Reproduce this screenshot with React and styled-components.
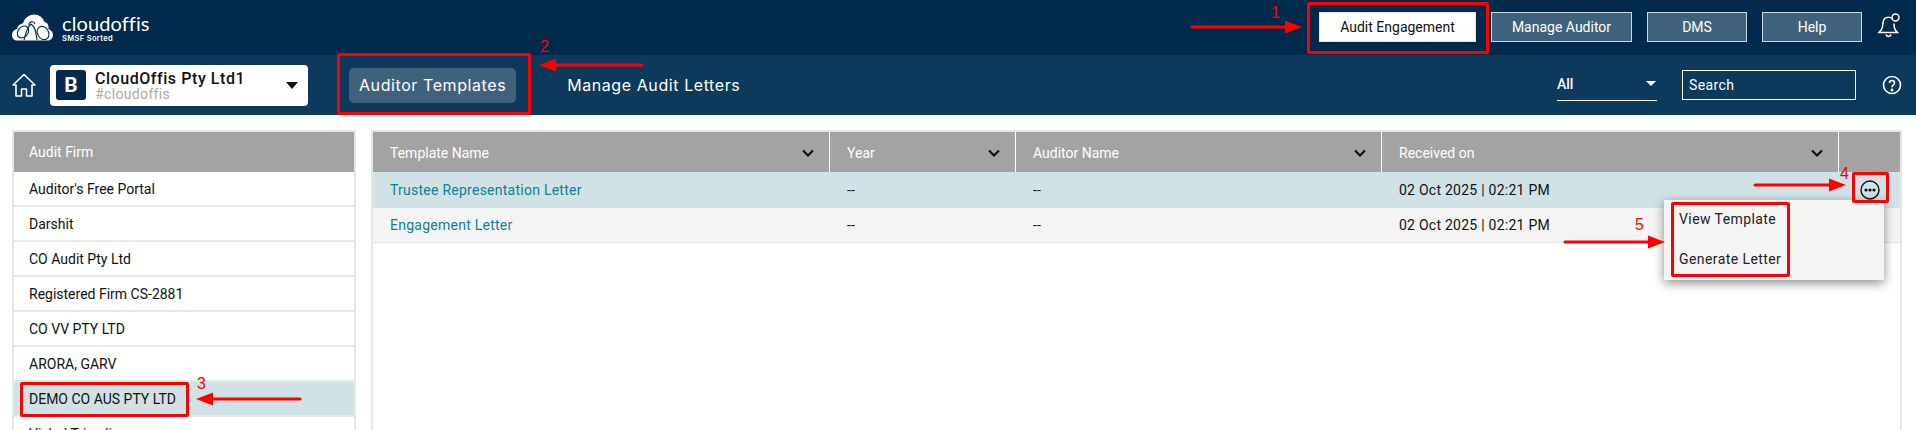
import React from "react";
import styled, { createGlobalStyle } from "styled-components";

const Global = createGlobalStyle`
  html, body { margin: 0; padding: 0; height: 430px; overflow: hidden; background: #fff; }
  body { font-family: Roboto, "Liberation Sans", sans-serif; font-size: 14px; color: #111; }
  * { box-sizing: border-box; }
`;

const Page = styled.div`position: relative; width: 1916px; height: 430px; overflow: hidden;`;

const TopBar = styled.header`
  height: 55px; background: #00294c; display: flex; align-items: flex-start;
  justify-content: space-between; padding: 12px 14px 0 12px;
`;
const Logo = styled.div`display: flex; gap: 9px; align-items: flex-start; margin-top: 2px; color: #fff;`;
const LogoText = styled.div`display: flex; flex-direction: column;`;
const LogoName = styled.span`font-family: Lato, sans-serif; font-size: 20px; line-height: 18px; letter-spacing: .1px;`;
const LogoSub = styled.span`font-family: Inter, sans-serif; font-size: 7.5px; font-weight: 600; line-height: 10px; letter-spacing: .35px; margin-top: 2px;`;
const TopNav = styled.nav`display: flex; align-items: flex-start; gap: 15px;`;
const NavBtn = styled.button`
  width: ${p => p.$w}px; height: 30px; font: 400 14px Roboto, sans-serif; padding: 0;
  color: ${p => p.$active ? "#111" : "#fff"}; background: ${p => p.$active ? "#fff" : "#3f627c"};
  border: 1px solid #cfd8de;
  border-color: ${p => p.$active ? "#e5e5e5" : "#cfd8de"};
`;
const BellWrap = styled.div`margin-top: 1px; height: 26px;`;

const SubBar = styled.div`
  height: 60px; background: #0d3a5c; display: flex; align-items: center; padding: 0 12px;
`;
const Firm = styled.div`
  width: 258px; height: 41px; margin-left: 14px; background: #fff; border-radius: 4px; display: flex;
  align-items: center; padding: 0 10px 0 6px; gap: 9px; margin-top: 0;
`;
const FirmBadge = styled.div`
  width: 30px; height: 30px; border-radius: 3px; background: #00294c; color: #fff;
  display: flex; align-items: center; justify-content: center; font: 700 21px Roboto, sans-serif;
`;
const FirmText = styled.div`flex: 1; display: flex; flex-direction: column;`;
const FirmName = styled.span`font-size: 16px; font-weight: 500; line-height: 17px; letter-spacing: .55px; margin-top: 1px;`;
const FirmTag = styled.span`font-size: 14px; line-height: 15px; color: #aaa; letter-spacing: .35px;`;
const Caret = styled.span`
  width: 0; height: 0; border-left: ${p => p.$s}px solid transparent; border-right: ${p => p.$s}px solid transparent;
  border-top: ${p => p.$h}px solid ${p => p.$c};
`;
const Tabs = styled.div`display: flex; align-items: center; margin-left: 41px; flex: 1; gap: 41px;`;
const Tab = styled.div`
  height: 35px; padding: 0 10px; border-radius: 5px; display: flex; align-items: center; color: #fff;
  font: 400 16px Inter, sans-serif; letter-spacing: .58px; background: ${p => p.$active ? "#3f627c" : "transparent"};
`;
const Filter = styled.div`
  width: 100px; height: 32px; margin-top: 0; border-bottom: 1px solid #fff; color: #fff; display: flex;
  align-items: center; justify-content: space-between; padding: 0 1px 2px 0; font-size: 14px; font-weight: 500;
`;
const Search = styled.div`
  width: 174px; height: 30px; margin-left: 25px; border: 1px solid #fff; color: #fff; display: flex; align-items: center;
  padding: 0 6px; font-size: 14px; font-weight: 400; letter-spacing: .4px;
`;
const HelpIcon = styled.div`margin-left: 26px; width: 20px; height: 20px; margin-right: 2px;`;

const Content = styled.main`display: flex; padding: 15px 14px 0 12px; gap: 15px;`;
const FirmPanel = styled.section`width: 344px; height: 340px; border: 2px solid #e6e6e6; flex: none;`;
const PanelHead = styled.div`
  height: 40px; background: #a3a3a3; color: #fff; font-size: 14px; display: flex; align-items: center; padding: 0 15px;
`;
const FirmRow = styled.div`
  height: 35px; padding: 0 15px; display: flex; align-items: center; font-size: 14px; color: #111;
  border-bottom: 2px solid #e8e8e8; background: ${p => p.$sel ? "#d1e2e7" : "#fff"};
`;
const TablePanel = styled.section`flex: 1; height: 340px; border: 2px solid #e6e6e6; position: relative;`;
const Grid = `display: grid; grid-template-columns: 457px 186px 366px 457px 1fr;`;
const HeadRow = styled.div`${Grid} height: 40px; background: #a3a3a3;`;
const HeadCell = styled.div`
  display: flex; align-items: center; justify-content: space-between; padding: 2px 14px 0 17px; color: #fff;
  font-size: 14px; border-right: 1px solid #fff; &:last-child { border-right: 0; }
`;
const Row = styled.div`
  ${Grid} height: ${p => p.$h}px; background: ${p => p.$sel ? "#d1e2e7" : "#f4f4f4"};
  border-bottom: ${p => p.$sel ? "0" : "1px solid #e6e6e6"};
`;
const Cell = styled.div`display: flex; align-items: center; padding-left: 17px; font-size: 14px; letter-spacing: .25px; color: #111;`;
const LinkCell = styled(Cell)`color: #0e7f94;`;
const MoreCell = styled.div`display: flex; align-items: center; padding-left: 21px;`;

const Menu = styled.div`
  position: absolute; left: 1291px; top: 68px; width: 220px; height: 80px; background: #f4f4f4;
  box-shadow: 0 3px 10px rgba(0,0,0,.45); display: flex; flex-direction: column;
  padding: 0 15px; font-size: 14px; letter-spacing: .42px; color: #222; z-index: 2;
`;
const MenuItem = styled.div`line-height: 40px; margin-top: ${p => p.$first ? "-1px" : "0"};`;

const Mark = styled.div`
  position: absolute; left: ${p => p.$x}px; top: ${p => p.$y}px; width: ${p => p.$w}px; height: ${p => p.$h}px;
  border: 3px solid #f00; border-radius: 2px; z-index: 5; pointer-events: none;
`;
const Num = styled.span`
  position: absolute; left: ${p => p.$x}px; top: ${p => p.$y}px; color: #f00; font: 400 16px "Liberation Sans", sans-serif;
  line-height: 18px; z-index: 5;
`;
const ArrowLayer = styled.svg`position: absolute; left: 0; top: 0; z-index: 5; pointer-events: none;`;

const Chevron = () => (
  <svg width="14" height="14" viewBox="0 0 14 14" fill="none" stroke="#111" strokeWidth="2.2"><path d="M2 4.500 7 9.500 12 4.500" /></svg>
);

const firms = ["Auditor's Free Portal", "Darshit", "CO Audit Pty Ltd", "Registered Firm CS-2881", "CO VV PTY LTD", "ARORA, GARV", "DEMO CO AUS PTY LTD", "Vishal Trivedi"];

const arrows = [
  [1192, 27, 1302, 27],
  [642, 65, 539, 65],
  [300, 399, 196, 399],
  [1755, 185, 1846, 185],
  [1565, 242, 1665, 242],
];

function Arrow({ a }) {
  const [x1, y1, x2, y2] = a;
  const d = x2 > x1 ? 1 : -1;
  const bx = x2 - d * 17;
  return (
    <g>
      <line x1={x1} y1={y1} x2={bx} y2={y2} stroke="#f00" strokeWidth="3" strokeLinecap="round" />
      <polygon points={`${x2},${y2} ${bx},${y2 - 6.5} ${bx},${y2 + 6.5}`} fill="#f00" />
    </g>
  );
}

export default function App() {
  return (
    <Page>
      <Global />
      <TopBar>
        <Logo>
          <svg width="41" height="27" viewBox="0 0 41 27">
            <path fill="#fff" d="M5 26.500C2 26.500 0 24 0 21c0-3 2-5.500 5-6 .5-3 3-5.500 6-5.500C12.500 4 17 .5 22 .5c5 0 9 3 10.500 7.500 3 .5 4.500 3.500 4 7 2.500 1 4.500 3 4.500 6 0 3-2.500 5.500-5 5.500z" />
            <g fill="none" stroke="#00294c" strokeWidth="1.1">
              <ellipse cx="11" cy="18" rx="5" ry="6.500" transform="rotate(40 11 18)" />
              <ellipse cx="31" cy="19" rx="5.500" ry="7" transform="rotate(-30 31 19)" />
              <path d="M12 26c2-7 3-13 7-16 5 3 5 10 6 16M17 11c-1-3 5-5 6-1" />
            </g>
          </svg>
          <LogoText>
            <LogoName>cloudoffis</LogoName>
            <LogoSub>SMSF Sorted</LogoSub>
          </LogoText>
        </Logo>
        <TopNav>
          <NavBtn $active $w={157}>Audit Engagement</NavBtn>
          <NavBtn $w={141}>Manage Auditor</NavBtn>
          <NavBtn $w={100}>DMS</NavBtn>
          <NavBtn $w={100}>Help</NavBtn>
          <BellWrap>
            <svg width="25" height="26" viewBox="0 0 25 26" fill="none" stroke="#fff" strokeWidth="1.5">
              <path d="M15 5.500C13.500 3.800 10 3.600 7.800 5.500 5.500 7.500 6 11 5.500 14c-.4 2.500-2 4-3.500 5.500h18.500c-1.500-1.500-2.500-2.500-3-4.500-.3-1.200-.5-3-.5-4.500" />
              <path d="M9 21.500c.5 2.500 4.500 2.500 5 0" />
              <circle cx="18.500" cy="4.500" r="3.500" />
            </svg>
          </BellWrap>
        </TopNav>
      </TopBar>

      <SubBar>
        <svg width="24" height="24" viewBox="0 0 24 24" fill="none" stroke="#fff" strokeWidth="1.6" strokeLinejoin="round">
          <path d="M1 12 12 1.500 23 12h-3v11h-5.500v-7h-5v7H4V12z" />
        </svg>
        <Firm>
          <FirmBadge>B</FirmBadge>
          <FirmText>
            <FirmName>CloudOffis Pty Ltd1</FirmName>
            <FirmTag>#cloudoffis</FirmTag>
          </FirmText>
          <Caret $s={6.5} $h={7} $c="#111" />
        </Firm>
        <Tabs>
          <Tab $active>Auditor Templates</Tab>
          <Tab>Manage Audit Letters</Tab>
        </Tabs>
        <Filter>
          All
          <Caret $s={5.5} $h={5} $c="#fff" />
        </Filter>
        <Search>Search</Search>
        <HelpIcon>
          <svg width="20" height="20" viewBox="0 0 20 20" fill="none" stroke="#fff" strokeWidth="1.6">
            <circle cx="10" cy="10" r="8.500" />
            <path d="M7.500 8c0-3.300 5-3.300 5 0 0 2-2.500 2-2.500 4.200" />
            <circle cx="10" cy="15" r=".6" fill="#fff" />
          </svg>
        </HelpIcon>
      </SubBar>

      <Content>
        <FirmPanel>
          <PanelHead>Audit Firm</PanelHead>
          {firms.map((f, i) => <FirmRow key={f} $sel={i === 6}>{f}</FirmRow>)}
        </FirmPanel>
        <TablePanel>
          <HeadRow>
            <HeadCell>Template Name<Chevron /></HeadCell>
            <HeadCell>Year<Chevron /></HeadCell>
            <HeadCell>Auditor Name<Chevron /></HeadCell>
            <HeadCell>Received on<Chevron /></HeadCell>
            <HeadCell />
          </HeadRow>
          <Row $sel $h={36}>
            <LinkCell>Trustee Representation Letter</LinkCell>
            <Cell>--</Cell>
            <Cell>--</Cell>
            <Cell>02 Oct 2025 | 02:21 PM</Cell>
            <MoreCell>
              <svg width="20" height="20" viewBox="0 0 20 20">
                <circle cx="10" cy="10" r="9" fill="none" stroke="#111" strokeWidth="1.4" />
                <circle cx="6" cy="10" r="1.600" fill="#111" />
                <circle cx="10" cy="10" r="1.600" fill="#111" />
                <circle cx="14" cy="10" r="1.600" fill="#111" />
              </svg>
            </MoreCell>
          </Row>
          <Row $h={35}>
            <LinkCell>Engagement Letter</LinkCell>
            <Cell>--</Cell>
            <Cell>--</Cell>
            <Cell>02 Oct 2025 | 02:21 PM</Cell>
            <Cell />
          </Row>
          <Menu>
            <MenuItem $first>View Template</MenuItem>
            <MenuItem>Generate Letter</MenuItem>
          </Menu>
        </TablePanel>
      </Content>

      <Mark $x={1307} $y={2} $w={182} $h={52} />
      <Mark $x={337} $y={53} $w={194} $h={62} />
      <Mark $x={20} $y={382} $w={169} $h={35} />
      <Mark $x={1852} $y={172} $w={37} $h={31} />
      <Mark $x={1671} $y={202} $w={119} $h={75} />
      <Num $x={1271} $y={4}>1</Num>
      <Num $x={540} $y={38}>2</Num>
      <Num $x={197} $y={375}>3</Num>
      <Num $x={1840} $y={165}>4</Num>
      <Num $x={1635} $y={216}>5</Num>
      <ArrowLayer width="1916" height="430">
        {arrows.map((a, i) => <Arrow key={i} a={a} />)}
      </ArrowLayer>
    </Page>
  );
}
